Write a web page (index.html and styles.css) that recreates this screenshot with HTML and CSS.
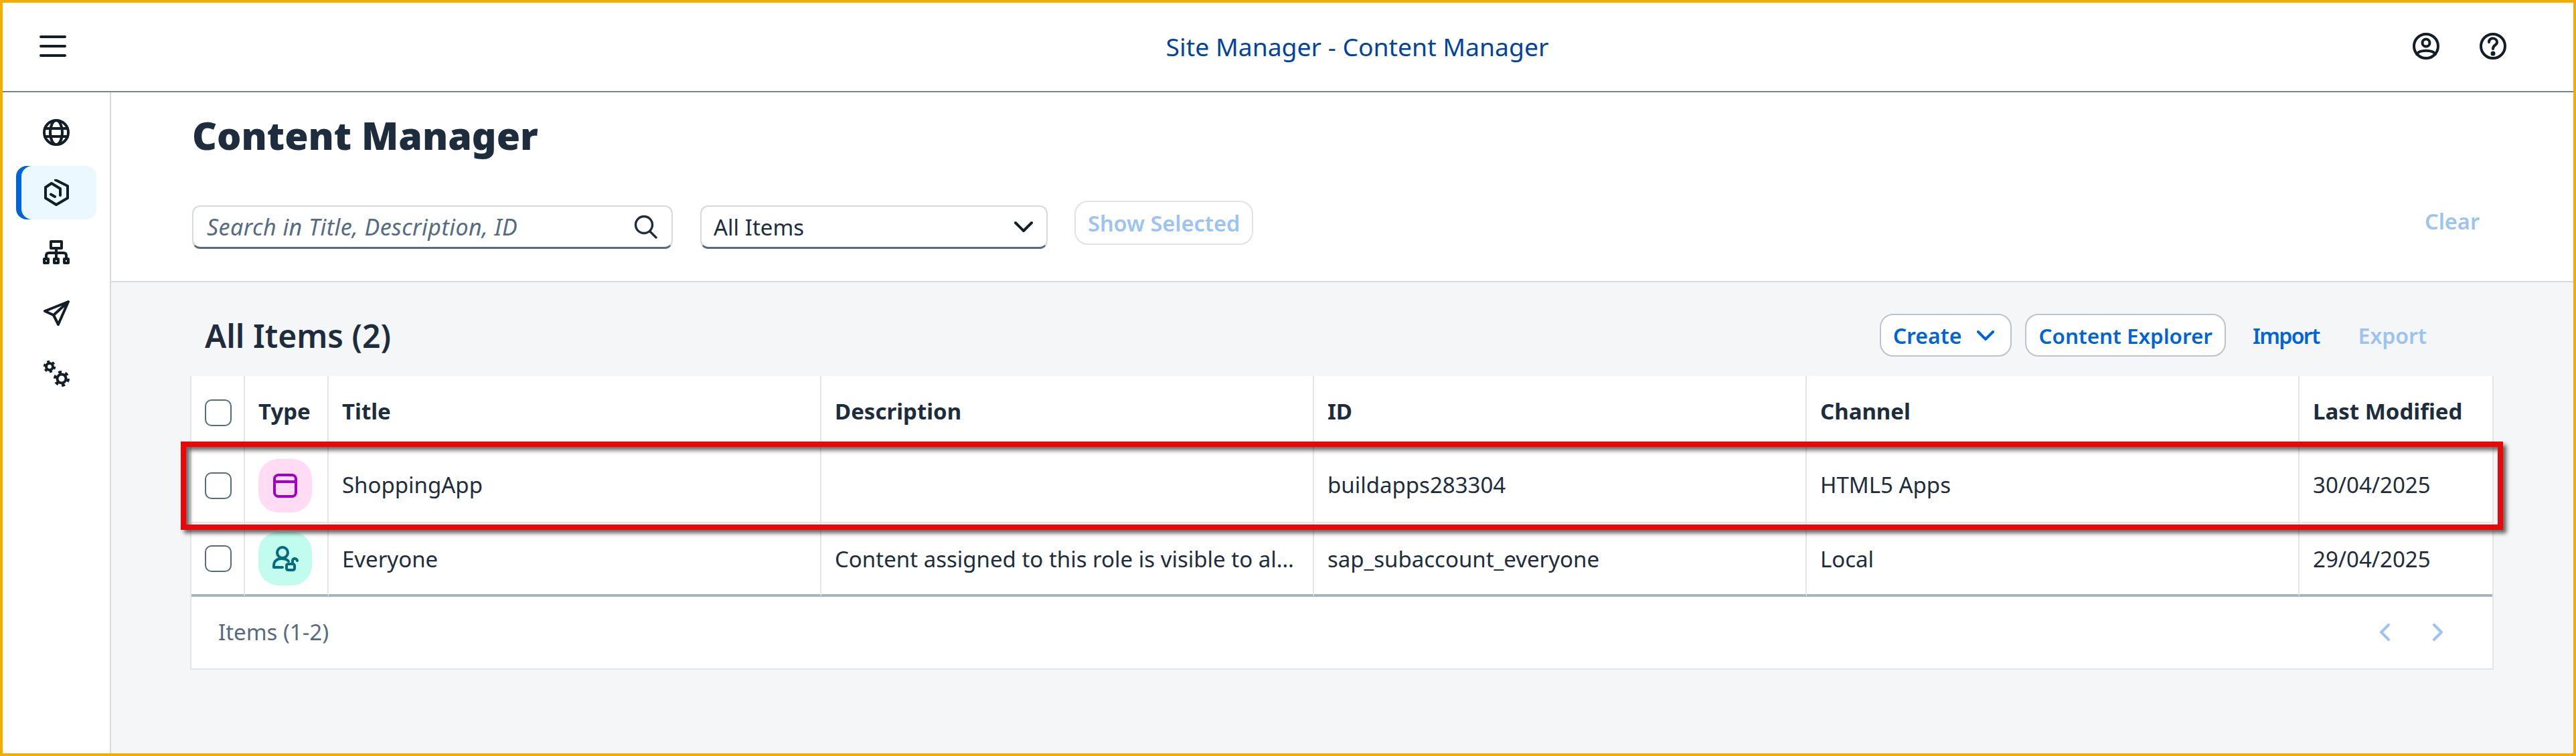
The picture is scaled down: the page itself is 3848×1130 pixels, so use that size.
FILE: index.html
```html
<!DOCTYPE html>
<html lang="en">
<head>
  <meta charset="UTF-8" />
  <title>Site Manager - Content Manager</title>
  <link rel="stylesheet" href="styles.css">
</head>
<body>
  <div class="frame">
    <header class="shell-bar">
      <div class="shell-left">
        <svg class="icon" viewBox="0 0 40 40"><path d="M2 6H38M2 20H38M2 34H38"/></svg>
      </div>
      <div class="shell-title">Site Manager - Content Manager</div>
      <div class="shell-right">
        <svg class="icon" viewBox="0 0 40 40"><circle cx="20" cy="20" r="18"/><circle cx="20" cy="15" r="5.5"/><path d="M6 32C10 25 30 25 34 32"/></svg>
        <svg class="icon" viewBox="0 0 40 40"><circle cx="20" cy="20" r="18"/><path d="M14 14C14 6 26 7 26 14C26 19 20 18 20 24"/><circle class="dot" cx="20" cy="31" r="1.5"/></svg>
      </div>
    </header>

    <div class="main">
      <nav class="side-nav">
        <a class="nav-item">
          <svg class="icon" viewBox="0 0 40 40"><circle cx="20" cy="20" r="18"/><ellipse cx="20" cy="20" rx="9" ry="18"/><path d="M3 14H37M3 26H37"/></svg>
        </a>
        <a class="nav-item active">
          <svg class="icon" viewBox="0 0 40 40"><path d="M19 1L37 10V28L20 38L4 28V12L13 6L26 14V24M12 22.5L18 26"/></svg>
        </a>
        <a class="nav-item">
          <svg class="icon" viewBox="0 0 40 40"><rect x="12" y="3" width="16" height="10"/><path d="M20 13V28M5 28V24Q5 20 9 20H31Q35 20 35 24V28"/><rect x="2" y="29" width="6" height="6"/><rect x="17" y="29" width="6" height="6"/><rect x="32" y="29" width="6" height="6"/></svg>
        </a>
        <a class="nav-item">
          <svg class="icon" viewBox="0 0 40 40"><path d="M38 3L3 17L16 23L23 37ZM38 3L16 23"/></svg>
        </a>
        <a class="nav-item">
          <svg class="icon" viewBox="0 0 40 40"><circle cx="10" cy="10" r="5"/><circle class="teeth-s" cx="10" cy="10" r="7.5"/><circle cx="28" cy="28" r="6.5"/><circle class="teeth-l" cx="28" cy="28" r="10"/></svg>
        </a>
      </nav>

      <main class="content">
        <section class="filter-panel">
          <h1 class="page-title">Content Manager</h1>
          <div class="filter-row">
            <div class="field search">
              <span class="placeholder">Search in Title, Description, ID</span>
              <svg class="icon icon-search" viewBox="0 0 36 36"><circle cx="15" cy="15" r="12.5"/><path d="M24 25L33 34"/></svg>
            </div>
            <div class="field select">
              <span>All Items</span>
              <svg class="icon icon-chevron" viewBox="0 0 28 18"><path d="M2 3L14 15L26 3"/></svg>
            </div>
            <button class="btn btn-disabled">Show Selected</button>
            <span class="clear">Clear</span>
          </div>
        </section>

        <section class="items">
          <div class="toolbar">
            <h2 class="items-title">All Items (2)</h2>
            <div class="actions">
              <button class="btn btn-create">Create
                <svg class="icon icon-down" viewBox="0 0 26 15"><path d="M2 2L13 13L24 2"/></svg>
              </button>
              <button class="btn btn-explorer">Content Explorer</button>
              <span class="link link-import">Import</span>
              <span class="link link-disabled">Export</span>
            </div>
          </div>

          <div class="table-box">
            <table class="items-table">
              <thead>
                <tr>
                  <th class="col-check"><span class="checkbox"></span></th>
                  <th class="col-type">Type</th>
                  <th class="col-wide">Title</th>
                  <th class="col-wide">Description</th>
                  <th class="col-wide">ID</th>
                  <th class="col-wide">Channel</th>
                  <th>Last Modified</th>
                </tr>
              </thead>
              <tbody>
                <tr>
                  <td><span class="checkbox"></span></td>
                  <td class="cell-type">
                    <span class="tile tile-pink">
                      <svg class="icon" viewBox="0 0 36 36"><rect x="2" y="2" width="32" height="32" rx="6"/><path d="M2 12H34"/></svg>
                    </span>
                  </td>
                  <td>ShoppingApp</td>
                  <td></td>
                  <td>buildapps283304</td>
                  <td>HTML5 Apps</td>
                  <td>30/04/2025</td>
                </tr>
                <tr class="last-row">
                  <td><span class="checkbox"></span></td>
                  <td class="cell-type">
                    <span class="tile tile-teal">
                      <svg class="icon" viewBox="0 0 40 40"><circle cx="16" cy="11" r="8"/><path d="M16 33H3V30C3 24 8 20 14 20C19 20 23 21 25 24"/><rect x="22" y="28" width="12" height="9" rx="2.5"/><path d="M31 27V23C31 19 37 19 38 23"/></svg>
                    </span>
                  </td>
                  <td>Everyone</td>
                  <td>Content assigned to this role is visible to al…</td>
                  <td>sap_subaccount_everyone</td>
                  <td>Local</td>
                  <td>29/04/2025</td>
                </tr>
              </tbody>
            </table>
            <div class="table-footer">
              <span>Items (1-2)</span>
              <div class="pager">
                <svg class="icon" viewBox="0 0 16 26"><path d="M14 2L3 13L14 24"/></svg>
                <svg class="icon" viewBox="0 0 16 26"><path d="M2 2L13 13L2 24"/></svg>
              </div>
            </div>
            <div class="highlight"></div>
          </div>
        </section>
      </main>
    </div>
  </div>
</body>
</html>
```

FILE: styles.css
```css
* {
  box-sizing: border-box;
}

html, body {
  margin: 0;
  padding: 0;
}

body {
  font-family: "Noto Sans", Arial, sans-serif;
  font-size: 33px;
  color: #1d2d3e;
  background-color: #fff;
}

.frame {
  width: 3848px;
  height: 1130px;
  border: 4px solid #f3ad00;
  display: flex;
  flex-direction: column;
  overflow: hidden;
}

.icon {
  display: block;
  width: 40px;
  height: 40px;
  fill: none;
  stroke: #131e29;
  stroke-width: 4;
  stroke-linecap: round;
  stroke-linejoin: round;
}

.dot {
  fill: #131e29;
}

.teeth-s {
  stroke-width: 3.5;
  stroke-linecap: butt;
  stroke-dasharray: 3.9 3.95;
}

.teeth-l {
  stroke-width: 4;
  stroke-linecap: butt;
  stroke-dasharray: 5 5.47;
}

/* top bar */
.shell-bar {
  height: 134px;
  flex: none;
  display: grid;
  grid-template-columns: 1fr auto 1fr;
  align-items: center;
  border-bottom: 2px solid #728399;
  padding: 0 100px 2px 55px;
}

.shell-title {
  margin-left: 252px;
  font-size: 37.3px;
  color: #00449e;
}

.shell-right {
  display: flex;
  justify-content: flex-end;
  gap: 60px;
}

.main {
  flex: 1;
  display: flex;
  min-height: 0;
}

/* left navigation */
.side-nav {
  width: 162px;
  flex: none;
  border-right: 2px solid #d9d9d9;
  padding: 20px 0 0 20px;
  display: flex;
  flex-direction: column;
  gap: 10px;
}

.nav-item {
  width: 120px;
  height: 80px;
  border-radius: 16px;
  display: flex;
  align-items: center;
  justify-content: center;
}

.nav-item.active {
  background-color: #ebf8ff;
  box-shadow: inset 8px 0 0 #0064d9;
}

.content {
  flex: 1;
  display: flex;
  flex-direction: column;
  min-width: 0;
}

/* filter area */
.filter-panel {
  height: 284px;
  flex: none;
  border-bottom: 2px solid #d9d9d9;
  padding: 24px 140px 0 121px;
}

.page-title {
  margin: 0 0 4px;
  height: 134px;
  font-size: 57.2px;
  line-height: 80px;
  font-weight: 900;
}

.filter-row {
  display: flex;
  align-items: flex-start;
  gap: 41px;
}

.field {
  height: 65px;
  margin-top: 7px;
  display: flex;
  align-items: center;
  justify-content: space-between;
  background-color: #fff;
  border: 2px solid #d5dadd;
  border-bottom: 3px solid #556b82;
  border-radius: 12px;
  padding: 0 20px;
}

.search {
  width: 718px;
}

.select {
  width: 519px;
  padding-left: 18px;
}

.placeholder {
  font-size: 34px;
  letter-spacing: 0.45px;
  font-style: italic;
  color: #556b82;
}

.icon-search {
  width: 36px;
  height: 36px;
  stroke: #1d2d3e;
  stroke-width: 3.4;
}

.icon-chevron {
  width: 28px;
  height: 18px;
}

.btn {
  height: 64px;
  padding: 0 18px;
  font-family: inherit;
  font-size: 32px;
  font-weight: 600;
  color: #0064d9;
  background-color: #fff;
  border: 2px solid #bcc3ca;
  border-radius: 20px;
}

.btn-explorer {
  font-size: 31.4px;
}

.btn-disabled {
  height: 66px;
  font-size: 32.5px;
  margin-left: -1px;
  color: #9cc4f2;
  border-color: #dfe3e7;
}

.clear {
  margin-left: auto;
  line-height: 62px;
  font-size: 32.5px;
  font-weight: 600;
  color: #9cc4f2;
}

/* list area */
.items {
  flex: 1;
  background-color: #f5f6f7;
  padding: 47px 119px 0 118px;
}

.toolbar {
  height: 64px;
  margin-bottom: 29px;
  padding: 0 100px 0 22px;
  display: flex;
  align-items: center;
  justify-content: space-between;
}

.items-title {
  margin: 0;
  font-size: 48px;
  font-weight: 600;
}

.actions {
  display: flex;
  align-items: center;
  gap: 20px;
}

.btn-create {
  display: flex;
  align-items: center;
  gap: 23px;
  padding-right: 24px;
}

.icon-down {
  width: 26px;
  height: 15px;
  stroke: #0064d9;
}

.link {
  font-size: 32px;
  font-weight: 600;
  color: #0064d9;
}

.link-import {
  margin-left: 20px;
  letter-spacing: -1.6px;
}

.link-disabled {
  margin-left: 38px;
  color: #9cc4f2;
}

.table-box {
  position: relative;
  background-color: #fff;
  border: 2px solid #e5e5e5;
  border-top: none;
}

.items-table {
  width: 100%;
  table-layout: fixed;
  border-collapse: separate;
  border-spacing: 0;
}

.col-check {
  width: 80px;
}

.col-type {
  width: 125px;
}

.col-wide {
  width: 736px;
}

.items-table th,
.items-table td {
  padding: 0 20px;
  text-align: left;
  border-right: 2px solid #e5e5e5;
  white-space: nowrap;
}

.items-table th {
  height: 110px;
  font-weight: 700;
  padding-bottom: 5px;
}

.items-table th:first-child {
  padding-bottom: 0;
}

.items-table td {
  height: 110px;
  border-bottom: 2px solid #e5e5e5;
}

.items-table td:nth-child(n+3) {
  padding-bottom: 3px;
}

.items-table th:last-child,
.items-table td:last-child {
  border-right: none;
}

.items-table .last-row td {
  border-bottom: 4px solid #a8b3bd;
  padding-bottom: 0;
}

.checkbox {
  display: block;
  width: 40px;
  height: 40px;
  background-color: #fff;
  border: 2px solid #556b82;
  border-radius: 10px;
}

.tile {
  display: flex;
  align-items: center;
  justify-content: center;
  width: 80px;
  height: 80px;
  border-radius: 30px;
}

.tile-pink {
  background-color: #ffdcf3;
}

.tile-pink .icon {
  width: 36px;
  height: 36px;
  stroke: #a100c2;
}

.tile-teal {
  background-color: #c2fcee;
}

.tile-teal .icon {
  stroke: #046c7a;
}

.table-footer {
  height: 107px;
  padding: 0 73px 2px 40px;
  display: flex;
  align-items: center;
  justify-content: space-between;
  color: #556b82;
}

.pager {
  display: flex;
  gap: 64px;
}

.pager .icon {
  width: 16px;
  height: 26px;
  stroke: #9cc4f2;
}

/* red annotation over the first row */
.highlight {
  position: absolute;
  left: -16px;
  top: 98px;
  width: 3469px;
  height: 132px;
  border: 8px solid #e80808;
  box-shadow: 5px 5px 6px rgba(0, 0, 0, 0.6), inset 5px 5px 6px rgba(0, 0, 0, 0.6);
  pointer-events: none;
}
```
